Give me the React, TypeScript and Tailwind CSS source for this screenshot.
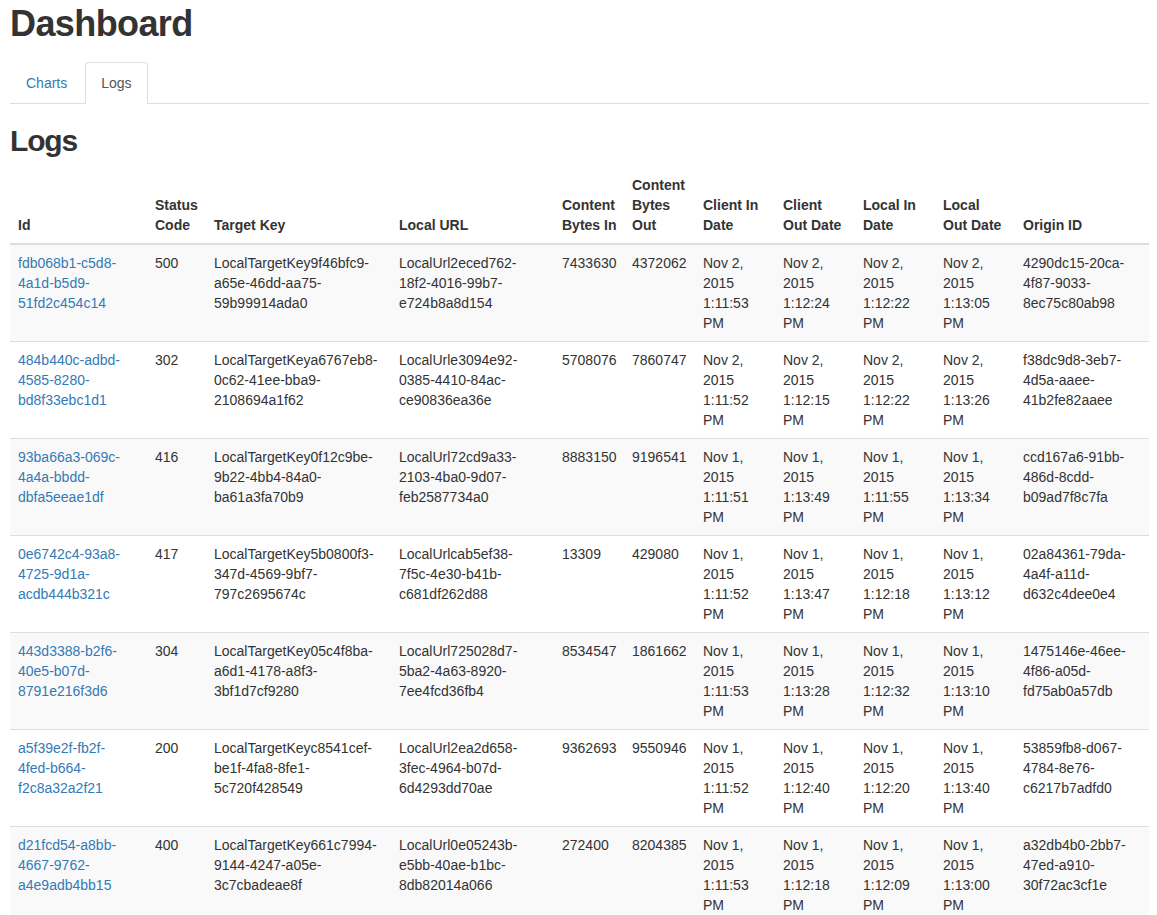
import React from "react";

type Row = {
  id: string;
  status: string;
  target: string;
  url: string;
  bytesIn: string;
  bytesOut: string;
  dates: string[];
  origin: string;
};

const rows: Row[] = [
  {
    id: "fdb068b1-c5d8-4a1d-b5d9-51fd2c454c14",
    status: "500",
    target: "LocalTargetKey9f46bfc9-a65e-46dd-aa75-59b99914ada0",
    url: "LocalUrl2eced762-18f2-4016-99b7-e724b8a8d154",
    bytesIn: "7433630",
    bytesOut: "4372062",
    dates: [
      "Nov 2, 2015 1:11:53 PM",
      "Nov 2, 2015 1:12:24 PM",
      "Nov 2, 2015 1:12:22 PM",
      "Nov 2, 2015 1:13:05 PM",
    ],
    origin: "4290dc15-20ca-4f87-9033-8ec75c80ab98",
  },
  {
    id: "484b440c-adbd-4585-8280-bd8f33ebc1d1",
    status: "302",
    target: "LocalTargetKeya6767eb8-0c62-41ee-bba9-2108694a1f62",
    url: "LocalUrle3094e92-0385-4410-84ac-ce90836ea36e",
    bytesIn: "5708076",
    bytesOut: "7860747",
    dates: [
      "Nov 2, 2015 1:11:52 PM",
      "Nov 2, 2015 1:12:15 PM",
      "Nov 2, 2015 1:12:22 PM",
      "Nov 2, 2015 1:13:26 PM",
    ],
    origin: "f38dc9d8-3eb7-4d5a-aaee-41b2fe82aaee",
  },
  {
    id: "93ba66a3-069c-4a4a-bbdd-dbfa5eeae1df",
    status: "416",
    target: "LocalTargetKey0f12c9be-9b22-4bb4-84a0-ba61a3fa70b9",
    url: "LocalUrl72cd9a33-2103-4ba0-9d07-feb2587734a0",
    bytesIn: "8883150",
    bytesOut: "9196541",
    dates: [
      "Nov 1, 2015 1:11:51 PM",
      "Nov 1, 2015 1:13:49 PM",
      "Nov 1, 2015 1:11:55 PM",
      "Nov 1, 2015 1:13:34 PM",
    ],
    origin: "ccd167a6-91bb-486d-8cdd-b09ad7f8c7fa",
  },
  {
    id: "0e6742c4-93a8-4725-9d1a-acdb444b321c",
    status: "417",
    target: "LocalTargetKey5b0800f3-347d-4569-9bf7-797c2695674c",
    url: "LocalUrlcab5ef38-7f5c-4e30-b41b-c681df262d88",
    bytesIn: "13309",
    bytesOut: "429080",
    dates: [
      "Nov 1, 2015 1:11:52 PM",
      "Nov 1, 2015 1:13:47 PM",
      "Nov 1, 2015 1:12:18 PM",
      "Nov 1, 2015 1:13:12 PM",
    ],
    origin: "02a84361-79da-4a4f-a11d-d632c4dee0e4",
  },
  {
    id: "443d3388-b2f6-40e5-b07d-8791e216f3d6",
    status: "304",
    target: "LocalTargetKey05c4f8ba-a6d1-4178-a8f3-3bf1d7cf9280",
    url: "LocalUrl725028d7-5ba2-4a63-8920-7ee4fcd36fb4",
    bytesIn: "8534547",
    bytesOut: "1861662",
    dates: [
      "Nov 1, 2015 1:11:53 PM",
      "Nov 1, 2015 1:13:28 PM",
      "Nov 1, 2015 1:12:32 PM",
      "Nov 1, 2015 1:13:10 PM",
    ],
    origin: "1475146e-46ee-4f86-a05d-fd75ab0a57db",
  },
  {
    id: "a5f39e2f-fb2f-4fed-b664-f2c8a32a2f21",
    status: "200",
    target: "LocalTargetKeyc8541cef-be1f-4fa8-8fe1-5c720f428549",
    url: "LocalUrl2ea2d658-3fec-4964-b07d-6d4293dd70ae",
    bytesIn: "9362693",
    bytesOut: "9550946",
    dates: [
      "Nov 1, 2015 1:11:52 PM",
      "Nov 1, 2015 1:12:40 PM",
      "Nov 1, 2015 1:12:20 PM",
      "Nov 1, 2015 1:13:40 PM",
    ],
    origin: "53859fb8-d067-4784-8e76-c6217b7adfd0",
  },
  {
    id: "d21fcd54-a8bb-4667-9762-a4e9adb4bb15",
    status: "400",
    target: "LocalTargetKey661c7994-9144-4247-a05e-3c7cbadeae8f",
    url: "LocalUrl0e05243b-e5bb-40ae-b1bc-8db82014a066",
    bytesIn: "272400",
    bytesOut: "8204385",
    dates: [
      "Nov 1, 2015 1:11:53 PM",
      "Nov 1, 2015 1:12:18 PM",
      "Nov 1, 2015 1:12:09 PM",
      "Nov 1, 2015 1:13:00 PM",
    ],
    origin: "a32db4b0-2bb7-47ed-a910-30f72ac3cf1e",
  },
];

const headers: { lines: string[]; w: string }[] = [
  { lines: ["Id"], w: "w-[137px]" },
  { lines: ["Status", "Code"], w: "w-[59px]" },
  { lines: ["Target Key"], w: "w-[185px]" },
  { lines: ["Local URL"], w: "w-[163px]" },
  { lines: ["Content", "Bytes In"], w: "w-[70px]" },
  { lines: ["Content", "Bytes", "Out"], w: "w-[71px]" },
  { lines: ["Client In", "Date"], w: "w-[80px]" },
  { lines: ["Client", "Out Date"], w: "w-[80px]" },
  { lines: ["Local In", "Date"], w: "w-[80px]" },
  { lines: ["Local", "Out Date"], w: "w-[80px]" },
  { lines: ["Origin ID"], w: "w-[134px]" },
];

// "a-b-c-d-e" -> ["a-b-", "c-d-", "e"]
function splitGuid(s: string): string[] {
  const p = s.split("-");
  return [`${p[0]}-${p[1]}-`, `${p[2]}-${p[3]}-`, p[4]];
}

// "Prefixa-b-c-d-e" -> ["Prefixa-", "b-c-d-", "e"]
function splitKey(s: string): string[] {
  const p = s.split("-");
  return [`${p[0]}-`, `${p[1]}-${p[2]}-${p[3]}-`, p[4]];
}

// "Nov 2, 2015 1:11:53 PM" -> ["Nov 2,", "2015", "1:11:53", "PM"]
function splitDate(s: string): string[] {
  const p = s.split(" ");
  return [`${p[0]} ${p[1]}`, p[2], p[3], p[4]];
}

function Lines({ lines }: { lines: string[] }) {
  return (
    <>
      {lines.map((l, i) => (
        <span key={i} className="block whitespace-nowrap">
          {l}
        </span>
      ))}
    </>
  );
}

const td = "border-t border-[#ddd] p-[8px] align-top";

export default function App() {
  return (
    <div className="min-h-screen bg-white pl-[10px] pr-[8px] font-['Liberation_Sans',Arial,sans-serif] text-[14px] leading-[20px] text-[#333]">
      <h1 className="mt-[4px] text-[36px] leading-[40px] font-bold tracking-[-0.6px] text-[#333]">
        Dashboard
      </h1>
      <ul className="mt-[18px] flex border-b border-[#ddd]">
        <li className="-mb-px mr-[2px]">
          <a
            href="#"
            className="block rounded-t-[4px] border border-transparent px-[15px] py-[10px] leading-[20px] text-[#337ab7]"
          >
            Charts
          </a>
        </li>
        <li className="-mb-px mr-[2px]">
          <a
            href="#"
            className="block rounded-t-[4px] border border-[#ddd] border-b-transparent bg-white px-[15px] py-[10px] leading-[20px] text-[#555]"
          >
            Logs
          </a>
        </li>
      </ul>
      <h2 className="mt-[20px] mb-[10px] text-[30px] leading-[33px] font-bold tracking-[-1.2px] text-[#333]">
        Logs
      </h2>
      <table className="w-[1139px] table-fixed border-collapse">
        <thead>
          <tr>
            {headers.map((h, i) => (
              <th
                key={i}
                className={`${h.w} border-b-2 border-[#ddd] p-[8px] text-left align-bottom font-bold leading-[20px] text-[#333]`}
              >
                <Lines lines={h.lines} />
              </th>
            ))}
          </tr>
        </thead>
        <tbody>
          {rows.map((r, i) => (
            <tr key={r.id} className={i % 2 === 0 ? "bg-[#f9f9f9]" : "bg-white"}>
              <td className={td}>
                <a href="#" className="text-[#337ab7]">
                  <Lines lines={splitGuid(r.id)} />
                </a>
              </td>
              <td className={td}>{r.status}</td>
              <td className={td}>
                <Lines lines={splitKey(r.target)} />
              </td>
              <td className={td}>
                <Lines lines={splitKey(r.url)} />
              </td>
              <td className={`${td} whitespace-nowrap`}>{r.bytesIn}</td>
              <td className={`${td} whitespace-nowrap`}>{r.bytesOut}</td>
              {r.dates.map((d, j) => (
                <td key={j} className={td}>
                  <Lines lines={splitDate(d)} />
                </td>
              ))}
              <td className={td}>
                <Lines lines={splitGuid(r.origin)} />
              </td>
            </tr>
          ))}
        </tbody>
      </table>
    </div>
  );
}
